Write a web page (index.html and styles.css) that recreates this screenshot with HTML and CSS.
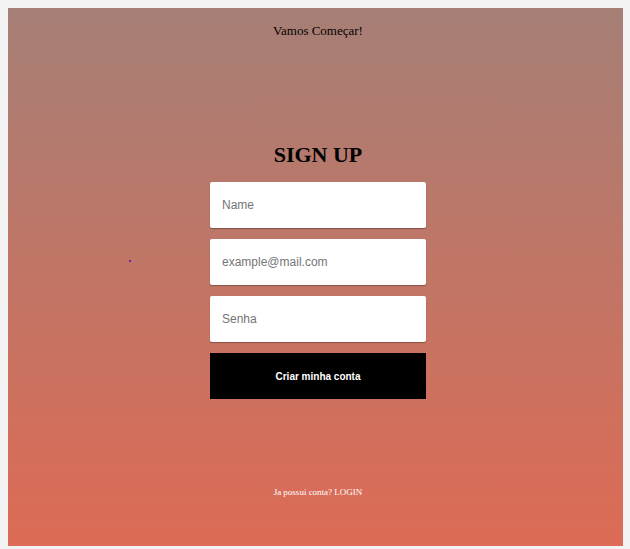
FILE: index.html
```html
<!DOCTYPE html>
<html lang="pt-BR">
<head>
<meta charset="utf-8">
<title>Sign Up</title>
<link rel="stylesheet" href="styles.css">
</head>
<body>
<main class="panel">
  <p class="intro">Vamos Começar!</p>
  <h1 class="title">SIGN UP</h1>
  <form class="form">
    <input class="field" type="text" placeholder="Name">
    <input class="field" type="email" placeholder="example@mail.com">
    <input class="field" type="password" placeholder="Senha">
    <button class="submit" type="button">Criar minha conta</button>
  </form>
  <p class="footer">Ja possui conta? LOGIN</p>
  <span class="dot"></span>
</main>
</body>
</html>
```
FILE: styles.css
```css
html, body {
  margin: 0;
  padding: 0;
}
body {
  background: #f3f3f3;
  padding: 8px 7px 3px 8px;
  font-family: "Liberation Serif", "Times New Roman", serif;
}
.panel {
  position: relative;
  width: 615px;
  height: 538px;
  box-sizing: border-box;
  background: linear-gradient(to bottom, #a67f76 0%, #dd6b55 100%);
  display: flex;
  flex-direction: column;
  align-items: center;
  padding-top: 15px;
  padding-left: 5px;
}
.intro {
  margin: 0;
  font-size: 13px;
  line-height: 15px;
  color: #000;
}
.title {
  margin: 104px 0 0 0;
  font-size: 22px;
  line-height: 25px;
  font-weight: bold;
  color: #000;
}
.form {
  margin-top: 15px;
  display: flex;
  flex-direction: column;
  gap: 11px;
  width: 216px;
}
.field {
  box-sizing: border-box;
  height: 46px;
  width: 100%;
  border: none;
  border-radius: 2px;
  background: #fff;
  box-shadow: 0 1px 1px rgba(60, 40, 40, 0.45);
  padding: 0 12px;
  font-family: "Liberation Sans", Arial, sans-serif;
  font-size: 12px;
  color: #333;
  outline: none;
}
.field::placeholder {
  color: #757575;
}
.submit {
  height: 46px;
  width: 100%;
  border: none;
  background: #000;
  color: #fff;
  font-family: "Liberation Sans", Arial, sans-serif;
  font-size: 10px;
  font-weight: bold;
  cursor: pointer;
}
.footer {
  margin: 88px 0 0 0;
  font-size: 9px;
  line-height: 11px;
  color: #fff;
}
.dot {
  position: absolute;
  left: 121px;
  top: 252px;
  width: 2px;
  height: 2px;
  background: #6a2a9a;
}
```
